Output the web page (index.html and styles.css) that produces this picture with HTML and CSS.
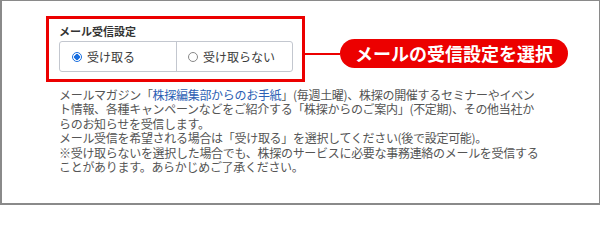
FILE: index.html
```html
<!DOCTYPE html>
<html lang="ja">
<head>
<meta charset="utf-8">
<link rel="stylesheet" href="styles.css">
</head>
<body>
<div class="frame">
  <div class="top">
    <div class="setting">
      <div class="label">メール受信設定</div>
      <div class="radios">
        <div class="opt"><span class="radio on"></span><span>受け取る</span></div>
        <div class="opt"><span class="radio"></span><span>受け取らない</span></div>
      </div>
    </div>
    <div class="callout">
      <span class="line"></span>
      <span class="pill">メールの受信設定を選択</span>
    </div>
  </div>
  <p class="desc">メールマガジン「<span class="link">株探編集部からのお手紙</span>」(毎週土曜)、株探の開催するセミナーやイベント情報、各種キャンペーンなどをご紹介する「株探からのご案内」(不定期)、その他当社からのお知らせを受信します。<br>メール受信を希望される場合は「受け取る」を選択してください(後で設定可能)。<br>※受け取らないを選択した場合でも、株探のサービスに必要な事務連絡のメールを受信することがあります。あらかじめご了承ください。</p>
</div>
</body>
</html>
```

FILE: styles.css
```css
html, body {
  margin: 0;
  padding: 0;
  background: #fff;
}
body {
  font-family: "Noto Sans CJK JP", "Noto Sans", sans-serif;
}
.frame {
  box-sizing: border-box;
  width: 600px;
  height: 205px;
  border: 1px solid #8a8a8a;
  border-left-width: 2px;
  border-bottom-width: 2px;
  background: #fff;
  overflow: hidden;
}
.top {
  display: flex;
  align-items: flex-start;
  margin: 15px 0 0 44px;
}
.setting {
  box-sizing: border-box;
  width: 259px;
  height: 66px;
  border: 3px solid #ec0000;
  padding: 6px 9px 0 10px;
}
.label {
  font-size: 11px;
  line-height: 13px;
  font-weight: bold;
  color: #333;
}
.radios {
  display: flex;
  margin-top: 3px;
  height: 31px;
  box-sizing: border-box;
  border: 1px solid #c3c7cf;
  border-radius: 3px;
}
.opt {
  flex: 1;
  display: flex;
  align-items: center;
  gap: 5px;
  padding-left: 12px;
  font-size: 12px;
  color: #3a3a3a;
}
.opt + .opt {
  border-left: 1px solid #c3c7cf;
  padding-left: 11px;
}
.radio {
  box-sizing: border-box;
  width: 10px;
  height: 10px;
  border-radius: 50%;
  border: 1px solid #888;
  background: #fff;
}
.radio.on {
  border: 1.5px solid #1a6fe0;
  background: radial-gradient(circle, #1a6fe0 0 2.6px, #fff 3px);
}
.callout {
  display: flex;
  align-items: center;
  margin-top: 23px;
}
.line {
  width: 35px;
  height: 2px;
  background: #ec0000;
}
.pill {
  height: 29px;
  line-height: 29px;
  padding: 0 15px;
  border-radius: 15px;
  background: #ec0000;
  color: #fff;
  font-weight: bold;
  font-size: 18px;
  white-space: nowrap;
}
.desc {
  margin: 6px 0 0 57px;
  width: 484px;
  font-size: 12px;
  letter-spacing: -0.3px;
  line-height: 14.45px;
  color: #555;
}
.link {
  color: #2d5fb4;
}
```
